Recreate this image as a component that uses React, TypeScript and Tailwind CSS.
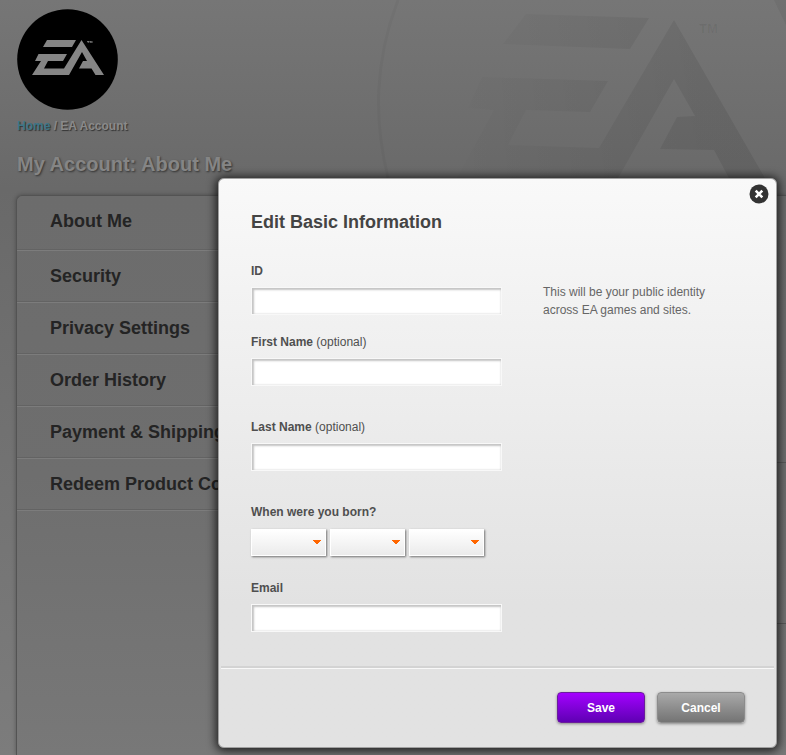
import { useState, type InputHTMLAttributes, type ReactNode } from "react";

const NAV_ITEMS = [
  "About Me",
  "Security",
  "Privacy Settings",
  "Order History",
  "Payment & Shipping",
  "Redeem Product Code",
];

const MONTHS = ["January", "February", "March", "April", "May", "June", "July", "August", "September", "October", "November", "December"];
const DAYS = Array.from({ length: 31 }, (_, i) => String(i + 1));
const YEARS = Array.from({ length: 100 }, (_, i) => String(2013 - i));

export default function App() {
  const [open, setOpen] = useState(true);

  return (
    <div className="relative min-h-screen overflow-hidden bg-linear-to-b from-[#767676] via-[#696969] via-25% to-[#7c7c7c] font-['Liberation_Sans',Arial,sans-serif]">
      <Watermark />

      <div className="relative flex min-h-screen flex-col pl-4">
        <header className="pt-[9px] pl-px">
          <Logo />
          <nav aria-label="Breadcrumb" className="mt-2 text-xs font-bold leading-4 text-[#8a8a8a] [text-shadow:1px_1px_1px_#333]">
            <a href="#home" className="text-[#3d7688]">Home</a> / EA Account
          </nav>
          <h1 className="mt-[18px] text-xl font-bold leading-6 text-[#858585] [text-shadow:1px_1px_2px_#333]">
            My Account: About Me
          </h1>
        </header>

        <div className="mt-[19px] flex grow rounded-tl-md border-t border-l border-[#535353] bg-linear-to-b from-[#6c6c6c] via-[#6e6e6e] via-50% to-[#787878] shadow-[0_0_4px_rgba(0,0,0,0.3)]">
          <SideNav />
          <main className="flex grow flex-col">
            <div className="h-[267px] border-b border-[#595959]" />
            <div className="h-[161px] border-b border-[#595959]" />
          </main>
        </div>
      </div>

      {open && <EditDialog onClose={() => setOpen(false)} />}
    </div>
  );
}

function SideNav() {
  return (
    <nav aria-label="Account" className="w-[240px] shrink-0">
      <ul>
        {NAV_ITEMS.map((item) => (
          <li key={item} className="group border-b border-[#7c7c7c]">
            <a href="#account" className="block h-[51px] border-b border-[#636363] pl-[33px] text-lg font-bold leading-[50px] whitespace-nowrap text-[#242424] group-first:h-[54px]">
              {item}
            </a>
          </li>
        ))}
      </ul>
    </nav>
  );
}

function EditDialog({ onClose }: { onClose: () => void }) {
  return (
    <div className="absolute inset-0 pt-[178px] pr-[9px] pb-2 pl-[218px]">
      <form
        role="dialog"
        aria-labelledby="dialog-title"
        onSubmit={(e) => e.preventDefault()}
        className="relative rounded-md border border-[#a0a0a0] bg-linear-to-b from-[#f9f9f9] to-[#e2e2e2] to-75% px-[2px] text-xs text-[#4f4f4f] shadow-[0_1px_10px_2px_rgba(0,0,0,0.75)]"
      >
        <button type="button" aria-label="Close" onClick={onClose} className="absolute top-[5px] right-[7px]">
          <svg viewBox="0 0 20 20" className="size-5">
            <circle cx="10" cy="10" r="9.5" fill="#333" />
            <path d="M6.7 6.7l6.6 6.6M13.3 6.7l-6.6 6.6" stroke="#fff" strokeWidth="2.6" />
          </svg>
        </button>

        <div className="px-[30px] pt-[31px] pb-[34px]">
          <h2 id="dialog-title" className="text-lg font-bold leading-6 text-[#444]">
            Edit Basic Information
          </h2>

          <div className="mt-7 flex gap-[41px]">
            <Field id="public-id" label="ID" />
            <p className="mt-[21px] w-[190px] leading-[18px] text-[#666]">This will be your public identity across EA games and sites.</p>
          </div>
          <div className="mt-[14px]">
            <Field id="first-name" label="First Name" optional />
          </div>
          <div className="mt-8">
            <Field id="last-name" label="Last Name" optional />
          </div>

          <fieldset className="mt-8">
            <legend className="font-bold leading-[18px]">When were you born?</legend>
            <div className="mt-2 flex gap-1">
              <DateSelect label="Month" options={MONTHS} />
              <DateSelect label="Day" options={DAYS} />
              <DateSelect label="Year" options={YEARS} />
            </div>
          </fieldset>

          <div className="mt-[23px]">
            <Field id="email" label="Email" type="email" />
          </div>
        </div>

        <footer className="flex justify-end gap-3 border-t-2 border-[#d3d3d3] px-[29px] pt-6 pb-6 shadow-[inset_0_1px_0_#f8f8f8]">
          <DialogButton type="submit" className="border-[#6b1d9c] bg-linear-to-b from-[#a400ff] to-[#5f00b4]">
            Save
          </DialogButton>
          <DialogButton type="button" onClick={onClose} className="border-[#8c8c8c] bg-linear-to-b from-[#a9a9a9] to-[#747474]">
            Cancel
          </DialogButton>
        </footer>
      </form>
    </div>
  );
}

interface FieldProps extends InputHTMLAttributes<HTMLInputElement> {
  id: string;
  label: string;
  optional?: boolean;
}

function Field({ id, label, optional, type = "text" }: FieldProps) {
  return (
    <div className="w-[251px] shrink-0">
      <label htmlFor={id} className="block leading-[18px]">
        <span className="font-bold">{label}</span>
        {optional && " (optional)"}
      </label>
      <input
        id={id}
        type={type}
        className="mt-[7px] block h-7 w-full border border-[#f8f8f8] bg-white px-2 shadow-[inset_1px_1px_2px_1px_#c4c4c4,inset_-2px_-2px_0_1px_#fff] outline-none"
      />
    </div>
  );
}

function DateSelect({ label, options }: { label: string; options: string[] }) {
  return (
    <div className="relative">
      <select
        aria-label={label}
        defaultValue=""
        className="block h-[27px] w-[75px] appearance-none border border-white bg-linear-to-b from-white to-[#ebebeb] px-2 shadow-[1px_1px_2px_rgba(0,0,0,0.5)] outline-none"
      >
        <option value="" />
        {options.map((option) => (
          <option key={option}>{option}</option>
        ))}
      </select>
      <svg viewBox="0 0 8 4" className="pointer-events-none absolute top-[11px] right-[5px] h-1 w-2">
        <path d="M0 0h8v1H7v1H6v1H5v1H3V3H2V2H1V1H0z" fill="#ff6600" />
      </svg>
    </div>
  );
}

interface DialogButtonProps {
  type: "button" | "submit";
  className: string;
  onClick?: () => void;
  children: ReactNode;
}

function DialogButton({ type, className, onClick, children }: DialogButtonProps) {
  return (
    <button
      type={type}
      onClick={onClick}
      className={`h-[31px] w-[88px] rounded border text-xs font-bold text-white shadow-[0_1px_3px_rgba(0,0,0,0.4)] ${className}`}
    >
      {children}
    </button>
  );
}

function Logo() {
  return (
    <svg viewBox="0 0 101 101" className="block size-[101px]" role="img" aria-label="EA">
      <circle cx="50.5" cy="50.5" r="50.3" fill="#000" />
      <g fill="#858585">
        <path d="M30 31H59L55 38H26z" />
        <path d="M21.5 45H50L46 52H31L27 59.5H47L64.5 31L87 66H78.5L74.5 59.5H62L66 52H70L65 43L52 66H15L24 52H18z" />
        <path d="M70 32h2.4v.7h-.8V34h-.8v-1.3H70zM72.8 32h.8l.5.9.5-.9h.8v2h-.6v-1.1l-.5.9h-.4l-.5-.9V34h-.6z" />
      </g>
    </svg>
  );
}

// Oversized emblem that bleeds off the top right corner, fading out to the left
function Watermark() {
  return (
    <svg viewBox="0 0 416 380" className="pointer-events-none absolute top-0 right-0 h-[380px] w-[416px]" aria-hidden="true">
      <defs>
        <linearGradient id="emblem-fade" gradientUnits="userSpaceOnUse" x1="90" y1="0" x2="330" y2="0">
          <stop offset="0" stopColor="#000" stopOpacity=".01" />
          <stop offset="1" stopColor="#000" stopOpacity=".08" />
        </linearGradient>
      </defs>
      <path d="M28 0C4 63 4 120 18 178" fill="none" stroke="#000" strokeOpacity=".03" strokeWidth="3" />
      <path d="M404 0L416 25V0z" fill="#000" fillOpacity=".05" />
      <g fill="url(#emblem-fade)">
        <path d="M156 14L279 18L260 49L133 44z" />
        <path d="M112 77L238 81L220 112L156 110L138 145L229 148L304 20L396 180H360L344 150L290 149L307 117L325 116L304 79L247 180H86L124 110L98 108z" />
      </g>
      <text x="329" y="33" fontSize="13" fontWeight="bold" fill="#000" fillOpacity=".06">TM</text>
    </svg>
  );
}
